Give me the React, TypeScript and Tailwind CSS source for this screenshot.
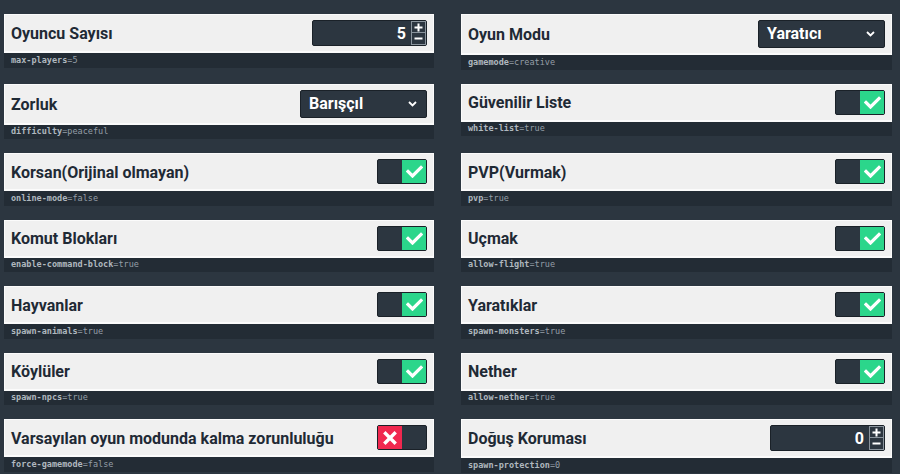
import React from "react";

type Control =
  | { kind: "number"; value: number }
  | { kind: "select"; value: string }
  | { kind: "toggle"; on: boolean };

interface Setting {
  title: string;
  keyName: string;
  value: string;
  control: Control;
}

const left: Setting[] = [
  { title: "Oyuncu Sayısı", keyName: "max-players", value: "5", control: { kind: "number", value: 5 } },
  { title: "Zorluk", keyName: "difficulty", value: "peaceful", control: { kind: "select", value: "Barışçıl" } },
  { title: "Korsan(Orijinal olmayan)", keyName: "online-mode", value: "false", control: { kind: "toggle", on: true } },
  { title: "Komut Blokları", keyName: "enable-command-block", value: "true", control: { kind: "toggle", on: true } },
  { title: "Hayvanlar", keyName: "spawn-animals", value: "true", control: { kind: "toggle", on: true } },
  { title: "Köylüler", keyName: "spawn-npcs", value: "true", control: { kind: "toggle", on: true } },
  { title: "Varsayılan oyun modunda kalma zorunluluğu", keyName: "force-gamemode", value: "false", control: { kind: "toggle", on: false } },
];

const right: Setting[] = [
  { title: "Oyun Modu", keyName: "gamemode", value: "creative", control: { kind: "select", value: "Yaratıcı" } },
  { title: "Güvenilir Liste", keyName: "white-list", value: "true", control: { kind: "toggle", on: true } },
  { title: "PVP(Vurmak)", keyName: "pvp", value: "true", control: { kind: "toggle", on: true } },
  { title: "Uçmak", keyName: "allow-flight", value: "true", control: { kind: "toggle", on: true } },
  { title: "Yaratıklar", keyName: "spawn-monsters", value: "true", control: { kind: "toggle", on: true } },
  { title: "Nether", keyName: "allow-nether", value: "true", control: { kind: "toggle", on: true } },
  { title: "Doğuş Koruması", keyName: "spawn-protection", value: "0", control: { kind: "number", value: 0 } },
];

function Toggle({ on }: { on: boolean }) {
  return (
    <div className={`flex h-[25px] w-[50px] rounded-[2px] border border-[#1a2128] bg-[#2c3640] ${on ? "justify-end" : "justify-start"}`}>
      {on ? (
        <div className="flex h-full w-[24px] items-center justify-center bg-[#2bd68b]">
          <svg width="17" height="13" viewBox="0 0 17 13">
            <path d="M2 6.5 L6.5 11 L15 2.5" fill="none" stroke="#fff" strokeWidth="3.2" strokeLinecap="square" />
          </svg>
        </div>
      ) : (
        <div className="flex h-full w-[24px] items-center justify-center bg-[#f0284f]">
          <svg width="14" height="14" viewBox="0 0 14 14">
            <path d="M2.5 2.5 L11.5 11.5 M11.5 2.5 L2.5 11.5" stroke="#fff" strokeWidth="3.4" strokeLinecap="square" />
          </svg>
        </div>
      )}
    </div>
  );
}

function NumberBox({ value }: { value: number }) {
  return (
    <div className="flex h-[26px] w-[115px] rounded-[2px] border border-[#1a2128] bg-[#2c3640]">
      <div className="flex flex-1 items-center justify-end pr-[5px] pt-[1px] text-[16px] font-bold text-white">{value}</div>
      <div className="flex w-[15px] flex-col">
        <div className="flex h-[12px] items-center justify-center border border-[#8a949d]">
          <svg width="9" height="9" viewBox="0 0 9 9">
            <path d="M4.5 0.5 V8.5 M0.5 4.5 H8.5" stroke="#fff" strokeWidth="2" />
          </svg>
        </div>
        <div className="flex h-[12px] items-center justify-center border border-t-0 border-[#8a949d]">
          <svg width="9" height="9" viewBox="0 0 9 9">
            <path d="M0.5 4.5 H8.5" stroke="#fff" strokeWidth="2" />
          </svg>
        </div>
      </div>
    </div>
  );
}

function Select({ value }: { value: string }) {
  return (
    <div className="flex h-[28px] w-[127px] items-center justify-between rounded-[2px] border border-[#1a2128] bg-[#2c3640] pl-[8px] pr-[9px]">
      <span className="text-[16px] font-bold leading-[20px] text-white">{value}</span>
      <svg width="9" height="6" viewBox="0 0 9 6">
        <path d="M1 1 L4.5 4.5 L8 1" fill="none" stroke="#fff" strokeWidth="1.8" />
      </svg>
    </div>
  );
}

function SettingCard({ s }: { s: Setting }) {
  const c = s.control;
  return (
    <div>
      <div className="flex items-center justify-between border border-b-2 border-[#fbfbfb] bg-[#f0f0f0] px-[6px] py-[5px]">
        <span className="pt-[2px] text-[16px] font-bold leading-[20px] text-[#1f2a35]">{s.title}</span>
        {c.kind === "toggle" && <Toggle on={c.on} />}
        {c.kind === "number" && <NumberBox value={c.value} />}
        {c.kind === "select" && <Select value={c.value} />}
      </div>
      <div className="flex h-[14.5px] items-center bg-[#232c35] px-[7px] font-['DejaVu_Sans_Mono',monospace] text-[8.5px] text-[#959ea7]">
        <span className="font-bold text-[#b0b8bf]">{s.keyName}</span>
        <span>={s.value}</span>
      </div>
    </div>
  );
}

export default function App() {
  return (
    <div className="h-[474px] w-[900px] overflow-hidden bg-[#2c3640] pl-[4px] pt-[14px] font-['Roboto',sans-serif]">
      <div className="grid grid-cols-[430px_431px] items-start gap-x-[27px] gap-y-[14px]">
        {left.map((s, i) => (
          <React.Fragment key={s.keyName}>
            <SettingCard s={s} />
            <SettingCard s={right[i]} />
          </React.Fragment>
        ))}
      </div>
    </div>
  );
}
